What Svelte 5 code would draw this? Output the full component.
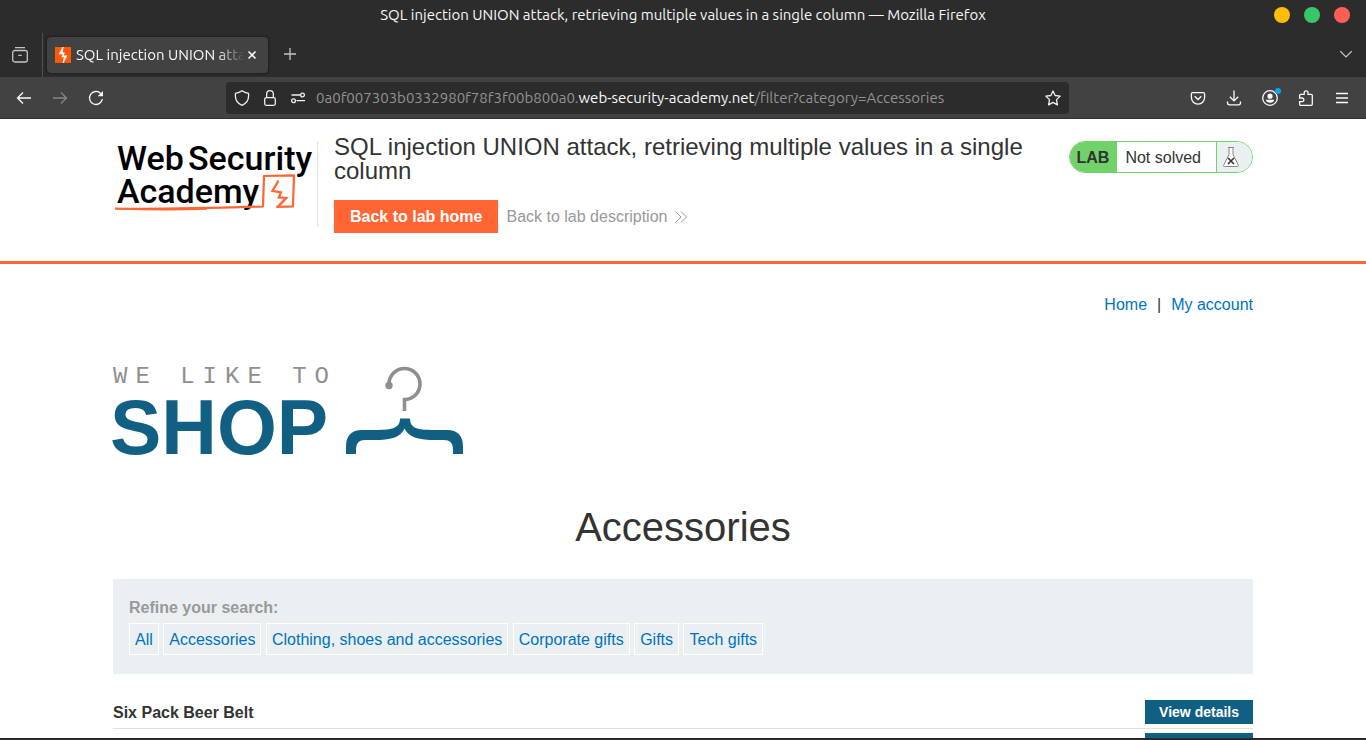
<script>
  const title = 'SQL injection UNION attack, retrieving multiple values in a single column';
  const categories = ['All', 'Accessories', 'Clothing, shoes and accessories', 'Corporate gifts', 'Gifts', 'Tech gifts'];
  const products = [{ name: 'Six Pack Beer Belt' }, { name: '' }];
</script>

<div class="window">
  <div class="titlebar">
    <span>{title} — Mozilla Firefox</span>
    <div class="lights">
      <button class="light min" aria-label="Minimize"></button>
      <button class="light max" aria-label="Maximize"></button>
      <button class="light close" aria-label="Close window"></button>
    </div>
  </div>

  <div class="tabs">
    <button class="icon view" aria-label="Recent browsing">
      <svg width="16" height="16" viewBox="0 0 16 16"><path d="M3 .7h10M.7 13V5.500a2 2 0 0 1 2-2h10.600a2 2 0 0 1 2 2V13a2 2 0 0 1-2 2H2.700a2 2 0 0 1-2-2zM6.300 8.300h3.400" /></svg>
    </button>
    <div class="tab">
      <svg class="favicon" width="16" height="16" viewBox="0 0 16 16"><rect width="16" height="16" fill="#ff5a0a" /><path d="M7.500 0 3.700 7.300h3.900L6.500 10.300h2.300L7.700 16h.9l3.700-7.600H8.700l1.100-3H7.700L8.500 0z" fill="#fff" /></svg>
      <span class="tabname">SQL injection UNION atta</span>
      <button class="tabclose" aria-label="Close tab">
        <svg width="10" height="10" viewBox="0 0 10 10"><path d="m1.500 1.500 7 7m0-7-7 7" /></svg>
      </button>
    </div>
    <button class="icon" aria-label="New tab">
      <svg width="14" height="14" viewBox="0 0 14 14"><path d="M7 1v12M1 7h12" /></svg>
    </button>
    <button class="icon list" aria-label="List all tabs">
      <svg width="14" height="14" viewBox="0 0 14 14"><path d="m1.300 4.300 5.700 5.600 5.700-5.600" /></svg>
    </button>
  </div>

  <div class="toolbar">
    <button class="icon bright" aria-label="Back"><svg width="16" height="16" viewBox="0 0 16 16"><path d="M15 8H1.500M7 2.500 1.500 8 7 13.500" /></svg></button>
    <button class="icon dim" aria-label="Forward"><svg width="16" height="16" viewBox="0 0 16 16"><path d="M1 8h13.500M9 2.500 14.500 8 9 13.500" /></svg></button>
    <button class="icon bright" aria-label="Reload"><svg width="16" height="16" viewBox="0 0 16 16"><path d="M14.400 9A6.500 6.500 0 1 1 12.700 3.500" /><path d="M15 1v5.300H9.700z" fill="currentColor" stroke="none" /></svg></button>
    <div class="spring"></div>
    <div class="urlbar">
      <button class="small" aria-label="Tracking protection"><svg width="16" height="16" viewBox="0 0 16 16"><path d="M8 .8c2 1.500 4.100 2.200 6.500 2.500.7 5.500-1.500 9.800-6.500 12C3 13.100.8 8.800 1.500 3.300 3.900 3 6 2.300 8 .8z" /></svg></button>
      <button class="small" aria-label="Connection secure"><svg width="16" height="16" viewBox="0 0 16 16"><rect x="2.700" y="7.700" width="10.600" height="7.600" rx="1.500" /><path d="M4.700 7.500V4a3.300 3.300 0 0 1 6.600 0v3.500" /></svg></button>
      <button class="small" aria-label="Permissions"><svg width="16" height="16" viewBox="0 0 16 16"><path d="M1.500 5H10M6.500 10.700H15" /><circle cx="12.500" cy="5" r="1.900" /><circle cx="3.500" cy="10.700" r="1.900" /></svg></button>
      <span class="url">0a0f007303b0332980f78f3f00b800a0.<b>web-security-academy.net</b>/filter?category=Accessories</span>
      <button class="small star" aria-label="Bookmark this page"><svg width="16" height="16" viewBox="0 0 16 16"><path d="m8 .9 2.100 4.600 5.100.6-3.700 3.500.9 5.300L8 12.400l-4.400 2.500.9-5.300L.8 6.100l5.100-.6z" stroke-linejoin="round" /></svg></button>
    </div>
    <div class="spring"></div>
    <button class="icon bright" aria-label="Save to Pocket"><svg width="16" height="16" viewBox="0 0 16 16"><path d="M2.700 2.700h10.600q1.300 0 1.300 1.300v3.500a6.600 6.600 0 0 1-13.200 0V4q0-1.300 1.300-1.300z" /><path d="M4.700 6.300 8 9.500l3.300-3.200" /></svg></button>
    <button class="icon bright" aria-label="Downloads"><svg width="16" height="16" viewBox="0 0 16 16"><path d="M8 .5v10.300M3.800 6.700 8 10.900l4.200-4.200M1.500 11.500v1.300a2 2 0 0 0 2 2h9a2 2 0 0 0 2-2v-1.300" /></svg></button>
    <button class="icon bright account" aria-label="Account"><svg width="16" height="16" viewBox="0 0 16 16"><circle cx="8" cy="8" r="7.300" /><circle cx="8" cy="6.200" r="2.600" fill="currentColor" stroke="none" /><path d="M3.800 9.800h8.400q-.4 3-4.200 3t-4.200-3z" fill="currentColor" stroke="none" /></svg><i></i></button>
    <button class="icon bright" aria-label="Extensions"><svg width="16" height="16" viewBox="0 0 16 16"><path d="M1.600 8V5.400q0-1 1-1h3.600V2.700a1.900 1.900 0 0 1 3.800 0v1.700h3.300q1 0 1 1v8.900q0 1-1 1H2.600q-1 0-1-1v-2.600H4a1.850 1.850 0 0 0 0-3.700z" /></svg></button>
    <button class="icon bright" aria-label="Menu"><svg width="16" height="16" viewBox="0 0 16 16"><path d="M2 3.500h12M2 8h12M2 12.500h12" /></svg></button>
  </div>

  <div class="page">
    <header>
      <div class="container head">
        <a class="academy" href="#academy" aria-label="Web Security Academy">
          <svg width="204" height="86" viewBox="0 0 204 86">
            <g class="wordmark"><text x="4" y="29">Web</text><text x="75" y="29">Security</text><text x="4" y="62">Academy</text></g>
            <g fill="none" stroke="#ff6633">
              <path d="M2 67.500q50 1 148-2l1-30.500 30-.6-1 31-16.800.4" stroke-width="2.200" stroke-linejoin="round" />
              <path d="M2 67.700q48 2 92 .3" stroke-width="1.600" />
              <path d="m165.500 39.500-6 10.500 8.500 1.400-2.200 5 7.500.5-8.300 8.700" stroke-width="2.300" />
            </g>
          </svg>
        </a>
        <div class="intro">
          <h2>{title}</h2>
          <div class="actions">
            <button class="labhome">Back to lab home</button>
            <a href="#description">Back to lab description<svg width="12" height="12" viewBox="0 0 12 12"><path d="m.5.500 5.500 5.500-5.500 5.500M6 .5 11.500 6 6 11.500" /></svg></a>
          </div>
        </div>
        <div class="status">
          <strong>LAB</strong><span>Not solved</span>
          <div class="flask"><svg width="18" height="22" viewBox="0 0 18 22"><path d="M6 1.500h6M7 1.500v7L1.500 19.500q0 1 1 1h13q1 0 1-1L11 8.500v-7" fill="#fff" stroke="#888" /><path d="m6 12 6 6m0-6-6 6" stroke="#333" stroke-width="1.600" /></svg></div>
        </div>
      </div>
    </header>

    <main class="container">
      <nav><a href="#home">Home</a><span>|</span><a href="#account">My account</a></nav>
      <svg class="shop" width="350" height="90" viewBox="0 0 350 90" role="img" aria-label="We like to shop">
        <text class="like" x="0" y="17">WE LIKE TO</text>
        <text class="big" x="-3" y="88">SHOP</text>
        <path d="M276 19a15.500 15.500 0 1 1 15.500 15.500V46" transform="translate(0 -1)" fill="none" stroke="#8f8f8f" stroke-width="3.600" />
        <circle cx="276" cy="19.500" r="3.700" fill="#8f8f8f" />
        <path d="M233 88V81q0-17 16-17h9c20 0 29-1 29-11.500h10c0 10.500 8 11.500 28 11.500h9q16 0 16 17v7h-10v-5q0-9-9-9h-8c-17 0-27-2-31.500-11.500C287 72 278 74 261 74h-9q-9 0-9 9v5z" fill="#125f84" />
      </svg>
      <h1>Accessories</h1>
      <section class="refine">
        <strong>Refine your search:</strong>
        <div>{#each categories as category}<a href="#category">{category}</a>{' '}{/each}</div>
      </section>
      <section class="products">
        {#each products as product}
          <div class="product"><h3>{product.name}</h3><button>View details</button></div>
        {/each}
      </section>
    </main>
  </div>
</div>

<style>
  :global(body) { margin: 0; }
  .window { height: 100vh; box-sizing: border-box; display: flex; flex-direction: column; overflow: hidden; border-bottom: 2px solid #29272a; background: #fff; color: #333; font: 16px/20px "Liberation Sans", Arial, sans-serif; }
  button { font: inherit; color: inherit; border: 0; padding: 0; background: none; }
  a { color: #0073bf; text-decoration: none; }
  svg { display: block; flex: none; }

  .titlebar, .tabs, .toolbar { flex: none; display: flex; align-items: center; background: #2c2c2c; color: #f7f7f7; font-family: Ubuntu, "Noto Sans", sans-serif; }
  .titlebar { height: 30px; justify-content: center; font-size: 15px; position: relative; }
  .lights { position: absolute; right: 16px; display: flex; gap: 14px; }
  .light { width: 16px; height: 16px; border-radius: 50%; }
  .min { background: #ffbd0a; }
  .max { background: #38c768; }
  .close { background: #ff5f52; }

  .icon { width: 36px; height: 36px; flex: none; display: flex; align-items: center; justify-content: center; color: #c4c4c4; }
  .icon svg, .small svg, .tabclose svg { fill: none; stroke: currentColor; stroke-width: 1.300; }
  .tabs { height: 47px; }
  .view { box-sizing: content-box; width: 40px; height: 44px; padding-right: 2px; align-self: end; border-right: 1px solid #505050; }
  .tab { width: 221px; height: 36px; margin: 2px 4px 0; box-sizing: border-box; padding: 0 8px; display: flex; align-items: center; background: #424242; border-radius: 4px; box-shadow: 0 0 3px #111; font-size: 15px; }
  .tabname { flex: 1; min-width: 0; margin-left: 5px; overflow: hidden; white-space: nowrap; mask-image: linear-gradient(90deg, #000 84%, transparent); }
  .tabclose { width: 16px; height: 16px; display: flex; align-items: center; justify-content: center; }
  .tabclose svg { stroke-width: 1.600; }
  .list { margin-left: auto; margin-right: 2px; }

  .toolbar { height: 42px; box-sizing: border-box; padding: 0 6px; background: #424242; border-bottom: 1px solid #303030; }
  .bright { color: #fafafa; }
  .dim { color: #868686; }
  .spring { flex: 0 1 112px; }
  .spring:nth-of-type(3) { flex-basis: 111px; }
  .urlbar { flex: 1; min-width: 0; height: 32px; display: flex; align-items: center; background: #2c2c2c; border-radius: 4px; box-sizing: border-box; padding: 0 2px; }
  .small { width: 28px; height: 28px; flex: none; display: flex; align-items: center; justify-content: center; color: #f0f0f0; }
  .url { flex: 1; min-width: 0; margin-left: 4px; overflow: hidden; white-space: nowrap; color: #929292; font-size: 15px; }
  .url b { color: #fafafa; font-weight: 400; }
  .account { position: relative; }
  .account i { position: absolute; left: 23px; top: 8px; width: 6px; height: 6px; border-radius: 50%; background: #00a8f5; }

  .page { flex: 1; min-height: 0; overflow: hidden; }
  .container { max-width: 1140px; margin: 0 auto; }
  header { border-bottom: 3px solid #ff6633; }
  .head { display: flex; align-items: flex-start; padding: 16px 0 28px; }
  .academy { margin-top: 6px; border-right: 1px solid #e0e0e0; }
  .wordmark { font: 500 34px/34px Roboto, sans-serif; fill: #000; }
  .intro { flex: 1; margin-left: 16px; }
  h2 { margin: 0 0 17px; font-size: 24px; line-height: 24px; font-weight: 400; }
  .actions { display: flex; align-items: center; gap: 8px; }
  .labhome { height: 33px; padding: 0 16px; background: #ff6633; color: #fff; font-weight: 700; }
  .actions a { display: flex; align-items: center; gap: 8px; color: #999; }
  .actions svg { fill: none; stroke: #999; stroke-width: 1; }
  .status { margin-top: 6px; height: 32px; box-sizing: border-box; display: flex; border: 1px solid #71d26c; border-radius: 16px; overflow: hidden; line-height: 32px; }
  .status strong { padding: 0 8px 0 7px; background: #71d26c; }
  .status span { padding: 0 15px 0 8px; }
  .flask { display: flex; align-items: center; padding: 0 12px 0 5px; border-left: 1px solid #71d26c; background: #eaeff2; }
  .flask svg { fill: none; }

  nav { display: flex; justify-content: flex-end; gap: 10px; padding-top: 31px; }
  .shop { margin-top: 51px; overflow: visible; }
  .like { font: 24px "Liberation Mono", monospace; letter-spacing: 8px; fill: #8f8f8f; }
  .big { font: bold 77px "Liberation Sans", Arial, sans-serif; fill: #125f84; }
  h1 { margin: 47px 0 28px; font-size: 40px; line-height: 48px; font-weight: 400; text-align: center; }
  .refine { padding: 19px 16px; background: #eaeff2; }
  .refine strong { display: block; color: #999; margin-bottom: 5px; }
  .refine a { display: inline-block; padding: 6px 5px 4px; border: 1px solid #fff; }
  .products { margin-top: 22px; }
  .product { display: flex; align-items: center; justify-content: space-between; padding: 4px 0; border-bottom: 1px solid #e0e0e0; }
  h3 { margin: 0; padding-top: 2px; font-size: 16px; }
  .product button { height: 24px; padding: 0 14px; background: #125f84; color: #fff; font-size: 14px; font-weight: 700; }
</style>
